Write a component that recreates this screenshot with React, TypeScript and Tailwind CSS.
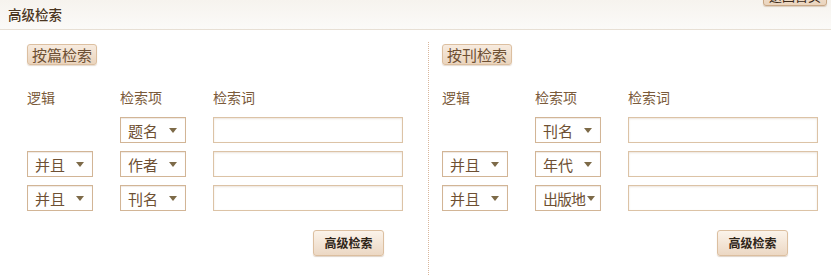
const font = { fontFamily: '"Noto Sans CJK SC", "Noto Sans", sans-serif' }

function Select({ value, tight }: { value: string; tight?: boolean }) {
  return (
    <div className="flex h-[26px] w-[66px] items-center justify-between border border-[#d2b596] bg-white pl-[7px] pr-[8px] shadow-[inset_0_1px_1px_rgba(150,110,70,0.15)]">
      <span className={`text-[15px] leading-none text-[#6e5033] ${tight ? 'tracking-[-1px]' : ''}`}>{value}</span>
      <span className={`h-0 w-0 border-x-[4px] border-t-[5px] border-x-transparent border-t-[#7d6a48] ${tight ? '-ml-[3px] mr-[-3px]' : ''}`} />
    </div>
  )
}

function Input() {
  return (
    <div className="h-[26px] w-[190px] border border-[#dcc3a6] bg-white shadow-[inset_0_1px_2px_rgba(160,120,80,0.2)]" />
  )
}

function Panel({ title, rows, btnOffset }: { title: string; rows: [string | null, string][]; btnOffset: string }) {
  return (
    <div className="flex flex-col">
      <div>
        <button className="h-[21px] rounded-[3px] border border-[#dcbfa0] bg-gradient-to-b from-[#f7ebdf] to-[#ead4bd] px-[4px] text-[15px] leading-none text-[#6e5033] shadow-[0_1px_1px_rgba(150,110,70,0.25)]">
          {title}
        </button>
      </div>
      <div className="mt-[24px] grid grid-cols-[93px_93px_190px] text-[14px] leading-none text-[#7a5a3a]">
        <span>逻辑</span>
        <span>检索项</span>
        <span>检索词</span>
      </div>
      <div className="mt-[13px] flex flex-col gap-[8px]">
        {rows.map(([logic, item], i) => (
          <div key={i} className="grid grid-cols-[93px_93px_190px]">
            <div>{logic && <Select value={logic} />}</div>
            <Select value={item} tight={item.length > 2} />
            <Input />
          </div>
        ))}
      </div>
      <div className={`mt-[18px] ${btnOffset}`}>
        <button className="h-[26px] w-[71px] rounded-[3px] border border-[#dcbfa0] bg-gradient-to-b from-[#fbf3ea] to-[#ecd8c4] text-[12px] font-bold leading-none text-[#2e2418] shadow-[0_1px_1px_rgba(150,110,70,0.3)]">
          高级检索
        </button>
      </div>
    </div>
  )
}

export default function App() {
  return (
    <div className="h-[275px] w-[831px] overflow-hidden bg-white" style={font}>
      <header className="flex h-[30px] items-start justify-between border-b border-[#e7dfd4] bg-gradient-to-b from-[#f6f3ee] to-[#fbfaf8]">
        <h1 className="ml-[8px] mt-[6px] text-[13.5px] font-medium leading-[16px] text-[#4a3520]">高级检索</h1>
        <button className="-mt-[15px] mr-[4px] h-[21px] w-[64px] rounded-[3px] border border-[#c9a886] bg-gradient-to-b from-[#f7ebdf] to-[#ead4bd] text-[13px] text-[#3b2a1a] shadow-[0_1px_1px_rgba(150,110,70,0.3)]">
          返回首页
        </button>
      </header>
      <div className="flex h-[245px]">
        <div className="w-[428px] pl-[27px] pt-[12px]">
          <Panel
            title="按篇检索"
            rows={[
              [null, '题名'],
              ['并且', '作者'],
              ['并且', '刊名'],
            ]}
            btnOffset="ml-[286px]"
          />
        </div>
        <div className="mt-[12px] w-0 border-l border-dotted border-[#d9b79c]" />
        <div className="flex-1 pl-[13px] pt-[12px]">
          <Panel
            title="按刊检索"
            rows={[
              [null, '刊名'],
              ['并且', '年代'],
              ['并且', '出版地'],
            ]}
            btnOffset="ml-[275px]"
          />
        </div>
      </div>
    </div>
  )
}
